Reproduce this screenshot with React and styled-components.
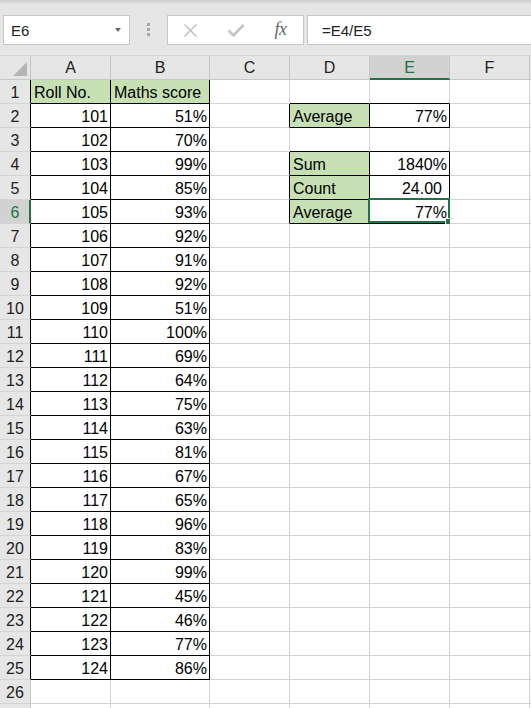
import React from 'react';
import styled, {createGlobalStyle, css} from 'styled-components';

const GREEN = '#217346';
const GRID = '#d4d4d4';
const HEAD_LINE = '#c6c6c6';

const GlobalStyle = createGlobalStyle`
	html, body {
		margin: 0;
		padding: 0;
		background: #fff;
		overflow: hidden;
	}
	body {
		font-family: "Liberation Sans", Arial, sans-serif;
		color: #000;
	}
`

const Page = styled.div`
	width: 531px;
	height: 708px;
	overflow: hidden;
`

// ---- formula bar area ----
const Toolbar = styled.div`
	height: 56px;
	display: flex;
	align-items: flex-start;
	padding: 15px 0 0 3px;
	box-sizing: border-box;
	background: linear-gradient(#cfcfcf 0, #e6e6e6 5px, #e6e6e6 100%);
	border-bottom: 1px solid #d6d6d6;
`

const NameBox = styled.div`
	width: 127px;
	height: 30px;
	box-sizing: border-box;
	border: 1px solid ${HEAD_LINE};
	background: #fff;
	display: flex;
	align-items: center;
	justify-content: space-between;
	padding: 0 8px 0 7px;
	font-size: 15px;
	color: #222;
`

const DropArrow = styled.span`
	width: 0;
	height: 0;
	border-left: 3.5px solid transparent;
	border-right: 3.5px solid transparent;
	border-top: 4px solid #6b6b6b;
`

const Dots = styled.div`
	margin: 8px 17px 0 17px;
	display: flex;
	flex-direction: column;
	gap: 2px;

	span {
		width: 3px;
		height: 3px;
		background: #a6a6a6;
	}
`

const ButtonBox = styled.div`
	width: 137px;
	height: 30px;
	box-sizing: border-box;
	border: 1px solid ${HEAD_LINE};
	background: #fff;
	display: flex;
`

const IconSlot = styled.div`
	width: 45px;
	height: 100%;
	display: flex;
	align-items: center;
	justify-content: center;
	color: #c4c4c4;
`

const Fx = styled.span`
	font-family: "Liberation Serif", "DejaVu Serif", serif;
	font-style: italic;
	font-size: 18px;
	color: #666;
	margin-top: -2px;
	letter-spacing: -0.5px;
`

const FormulaInput = styled.div`
	flex: 1;
	margin: 0 -10px 0 3px;
	height: 30px;
	box-sizing: border-box;
	border: 1px solid ${HEAD_LINE};
	background: #fff;
	display: flex;
	align-items: center;
	padding-left: 14px;
	font-size: 15px;
	color: #222;
`

// ---- sheet ----
const Sheet = styled.div`
	display: grid;
	grid-template-columns: 31px 80px 99px 80px 80px 80px 80px 80px;
	grid-auto-rows: 24px;
	font-size: 16px;
`

const headerBase = css`
	box-sizing: border-box;
	background: ${p => (p.$active ? '#d2d2d2' : '#e6e6e6')};
	color: ${p => (p.$active ? GREEN : '#222')};
	border-right: 1px solid ${HEAD_LINE};
	border-bottom: 1px solid ${HEAD_LINE};
	display: flex;
	justify-content: center;
`

const Corner = styled.div`
	${headerBase};
	position: relative;

	&::after {
		content: "";
		position: absolute;
		right: 3px;
		bottom: 3px;
		width: 0;
		height: 0;
		border-left: 14px solid transparent;
		border-bottom: 14px solid #b5b5b5;
	}
`

const ColHeader = styled.div`
	${headerBase};
	align-items: center;
	padding-top: 1px;
	${p => p.$active && css`border-bottom: 2px solid ${GREEN};`}
`

const RowHeader = styled.div`
	${headerBase};
	align-items: flex-end;
	line-height: 20px;
	border-bottom-color: ${GRID};
	border-right-color: ${p => (p.$dark ? '#000' : HEAD_LINE)};
	${p => p.$active && css`
		border-right: 2px solid ${GREEN};
		padding-left: 1px;
	`}
`

const Cell = styled.div`
	position: relative;
	box-sizing: border-box;
	background: ${p => (p.$fill ? '#c6e0b4' : '#fff')};
	border-right: 1px solid ${p => (p.$darkRight ? '#000' : GRID)};
	border-bottom: 1px solid ${p => (p.$darkBottom ? '#000' : GRID)};
	display: flex;
	align-items: flex-end;
	justify-content: ${p => (p.$num ? 'flex-end' : 'flex-start')};
	line-height: 20px;
	padding: 0 ${p => (p.$trail ? '7px' : '2px')} 0 3px;
	white-space: nowrap;
`

const Selection = styled.div`
	position: absolute;
	top: -2px;
	left: -2px;
	right: -1px;
	bottom: 0;
	border: 2px solid ${GREEN};
	pointer-events: none;

	&::after {
		content: "";
		position: absolute;
		right: -4px;
		bottom: -4px;
		width: 5px;
		height: 5px;
		background: ${GREEN};
		border: 1px solid #fff;
	}
`

// G and row 27 only peek in at the window edge, so they carry no label
const COLS = ['A', 'B', 'C', 'D', 'E', 'F', 'G'];
const LABELLED_COLS = 6;
const ROW_COUNT = 27;
const LABELLED_ROWS = 26;

const scores = [51, 70, 99, 85, 93, 92, 91, 92, 51, 100, 69, 64, 75, 63, 81, 67, 65, 96, 83, 99, 45, 46, 77, 86];

const cells = {
	A1: {v: 'Roll No.'},
	B1: {v: 'Maths score'},
	D2: {v: 'Average'},
	E2: {v: '77%', num: true},
	D4: {v: 'Sum'},
	E4: {v: '1840%', num: true},
	D5: {v: 'Count'},
	E5: {v: '24.00', num: true, trail: true},
	D6: {v: 'Average'},
	E6: {v: '77%', num: true},
};
scores.forEach((s, i) => {
	cells['A' + (i + 2)] = {v: String(101 + i), num: true};
	cells['B' + (i + 2)] = {v: s + '%', num: true};
});

const filled = new Set(['A1', 'B1', 'D2', 'D4', 'D5', 'D6']);

const isBoxed = (c, r) => {
	if ((c === 'A' || c === 'B') && r >= 1 && r <= 25) return true;
	if ((c === 'D' || c === 'E') && (r === 2 || (r >= 4 && r <= 6))) return true;
	return false;
};

const active = {col: 'E', row: 6};

const XIcon = () => (
	<svg width="15" height="15" viewBox="0 0 15 15">
		<path d="M1.5 1.5 L13.5 13.5 M13.5 1.5 L1.5 13.5" stroke="currentColor" strokeWidth="1.6" fill="none"/>
	</svg>
);

const CheckIcon = () => (
	<svg width="18" height="15" viewBox="0 0 18 15">
		<path d="M1.5 7.5 L6.5 12.5 L16.5 2" stroke="currentColor" strokeWidth="2.6" fill="none"/>
	</svg>
);

const App = () => {
	const rows = [];
	for (let r = 1; r <= ROW_COUNT; r++) {
		rows.push(
			<RowHeader key={'h' + r} $active={r === active.row} $dark={isBoxed('A', r) && r !== active.row}>
				{r <= LABELLED_ROWS ? r : ''}
			</RowHeader>
		);
		COLS.forEach((c, ci) => {
			const id = c + r;
			const data = cells[id];
			const next = COLS[ci + 1];
			rows.push(
				<Cell
					key={id}
					$fill={filled.has(id)}
					$num={data && data.num}
					$trail={data && data.trail}
					$darkRight={isBoxed(c, r) || (next && isBoxed(next, r))}
					$darkBottom={isBoxed(c, r) || isBoxed(c, r + 1)}
				>
					{data ? data.v : ''}
					{c === active.col && r === active.row && <Selection/>}
				</Cell>
			);
		});
	}

	return (
		<Page>
			<GlobalStyle/>
			<Toolbar>
				<NameBox>
					E6
					<DropArrow/>
				</NameBox>
				<Dots><span/><span/><span/></Dots>
				<ButtonBox>
					<IconSlot><XIcon/></IconSlot>
					<IconSlot><CheckIcon/></IconSlot>
					<IconSlot><Fx>fx</Fx></IconSlot>
				</ButtonBox>
				<FormulaInput>=E4/E5</FormulaInput>
			</Toolbar>
			<Sheet>
				<Corner/>
				{COLS.map((c, i) => (
					<ColHeader key={c} $active={c === active.col}>{i < LABELLED_COLS ? c : ''}</ColHeader>
				))}
				{rows}
			</Sheet>
		</Page>
	)
}

export default App
